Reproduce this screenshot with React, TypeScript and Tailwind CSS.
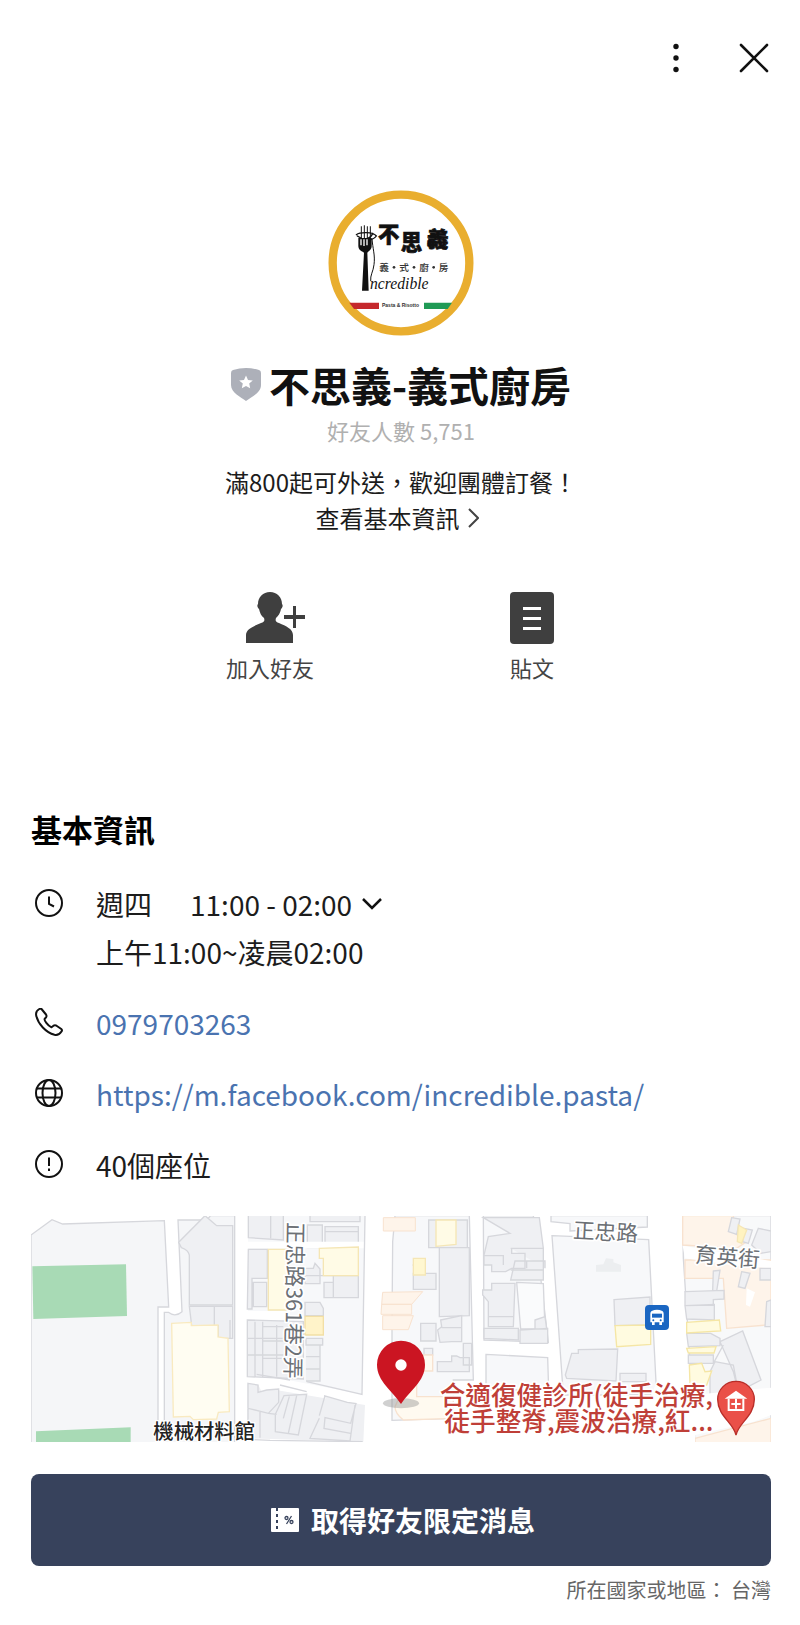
import type { ReactNode } from "react";

function Avatar() {
  return (
    <svg
      viewBox="54 62 438 438"
      className="w-[146px] h-[146px]"
      role="img"
      aria-label="不思義 義式廚房"
    >
      <circle cx="273" cy="281" r="205" fill="#fff" stroke="#e9ae2f" strokeWidth="25" />
      {/* fork */}
      <g stroke="#111" fill="none" strokeLinecap="round">
        <path d="M154 172v34M163 169v36M172 172v34M181 172v34" strokeWidth="3" />
        <path d="M139 196c10-8 50-10 60 4c-8 12-22 12-28 14M142 200c18 14 40 10 46-8" strokeWidth="4" />
        <path d="M186 208c2 30 10 50 6 78c-2 20-12 32-10 48" strokeWidth="3" />
      </g>
      <path
        d="M145 206h40v24c0 12-10 16-13 20l4 114h-20l6-114c-7-5-17-8-17-20Z"
        fill="#111"
      />
      <path d="M153 210v18M162 210v20M171 210v18" stroke="#fff" strokeWidth="4" />
      <g
        className="font-['Noto_Sans_CJK_TC','Noto_Sans',sans-serif]"
        fill="#111"
        stroke="#111"
      >
        <text x="204" y="217" fontSize="64" fontWeight="900" strokeWidth="2">不</text>
        <text x="272" y="241" fontSize="64" fontWeight="900" strokeWidth="2">思</text>
        <text x="350" y="234" fontSize="66" fontWeight="900" strokeWidth="2" transform="rotate(3 382 205)">義</text>
        <g stroke="none" fontSize="29" fontWeight="500" fill="#333">
          <text x="208" y="304">義</text>
          <text x="268" y="304">式</text>
          <text x="328" y="304">廚</text>
          <text x="386" y="304">房</text>
        </g>
      </g>
      <g fill="#333">
        <circle cx="252" cy="294" r="4" />
        <circle cx="312" cy="294" r="4" />
        <circle cx="371" cy="294" r="4" />
      </g>
      <text
        x="180"
        y="358"
        fontSize="47"
        fill="#111"
        className="font-['Liberation_Serif',serif] italic"
      >
        ncredible
      </text>
      <path d="M118 400h89v19h-75Z" fill="#c5282c" />
      <path d="M342 400h84l-13 19h-71Z" fill="#1f9a55" />
      <text
        x="216"
        y="414"
        fontSize="15"
        fontWeight="700"
        fill="#333"
        className="font-['Liberation_Sans',sans-serif]"
      >
        Pasta &amp; Risotto
      </text>
    </svg>
  );
}

function ShieldIcon() {
  return (
    <svg viewBox="0 0 30 34" className="w-[30px] h-[34px] shrink-0" aria-hidden="true">
      <path
        d="M2 3Q15-1 28 3Q30 3.500 30 6V18C30 26 20 30 15 34C10 30 0 26 0 18V6Q0 3.500 2 3Z"
        fill="#adb0b9"
      />
      <path
        d="m15 8.500 2 4.400 4.800.5-3.600 3.200 1 4.700-4.200-2.400-4.200 2.400 1-4.700-3.600-3.200 4.800-.5Z"
        fill="#fff"
      />
    </svg>
  );
}

function AddFriendIcon() {
  return (
    <svg viewBox="0 0 59 52" className="w-[59px] h-[52px]" fill="#3f3f3f" aria-hidden="true">
      <path d="M24 0C31 0 36 5 36 12C37 13 37 15 35 17C34 22 32 24 30 26C29 29 30 30 33 31C40 34 47 37 47 43V51H0V43C0 37 8 34 15 31C18 30 19 29 18 26C15 24 14 21 13 17C11 15 11 13 12 12C12 5 17 0 24 0Z" />
      <path d="M47 14h3v9h9v4h-9v9h-3v-9h-9v-4h9Z" />
    </svg>
  );
}

function PostIcon() {
  return (
    <svg viewBox="0 0 44 52" className="w-[44px] h-[52px]" aria-hidden="true">
      <rect width="44" height="52" rx="4" fill="#3f3f3f" />
      <path d="M13 16.500h18M13 26.500h18M13 36.500h18" stroke="#fff" strokeWidth="3" />
    </svg>
  );
}

function ClockIcon() {
  return (
    <svg viewBox="0 0 28 28" className="w-7 h-7" fill="none" stroke="#111" strokeWidth="2" aria-hidden="true">
      <circle cx="14" cy="14" r="13" />
      <path d="M14 7.500v7.500l5 2.500" />
    </svg>
  );
}

function PhoneIcon() {
  return (
    <svg viewBox="0 0 28 28" className="w-7 h-7" fill="none" stroke="#111" strokeWidth="2" strokeLinejoin="round" aria-hidden="true">
      <path d="M6.500 1L11 6.500Q12 8 11 9.300L9.600 11C9 12 12.500 17.500 16.500 19.300L18.500 17.700Q20 16.800 21.500 17.700L26.300 21Q27.500 22 26.500 23.500C24.500 26.500 22.500 27.500 19.500 26.800C11 24.500 3 16 1.200 7.500C.6 4.500 2 2.300 4.300 1Q5.500.3 6.500 1Z" />
    </svg>
  );
}

function GlobeIcon() {
  return (
    <svg viewBox="0 0 28 28" className="w-7 h-7" fill="none" stroke="#111" strokeWidth="2" aria-hidden="true">
      <circle cx="14" cy="14" r="13" />
      <ellipse cx="14" cy="14" rx="6.500" ry="13" />
      <path d="M2 9.500h24M2 18.500h24" />
    </svg>
  );
}

function NoticeIcon() {
  return (
    <svg viewBox="0 0 28 28" className="w-7 h-7" fill="none" stroke="#111" strokeWidth="2" aria-hidden="true">
      <circle cx="14" cy="14" r="13" />
      <path d="M14 7.500v8.500M14 18.500v2.500" />
    </svg>
  );
}

function CouponIcon() {
  return (
    <svg viewBox="0 0 28 24" className="w-7 h-6 shrink-0" aria-hidden="true">
      <path d="M1 0h26a1 1 0 0 1 1 1v22a1 1 0 0 1-1 1H1a1 1 0 0 1-1-1V1a1 1 0 0 1 1-1Z" fill="#fff" />
      <path d="M6 0v24" stroke="#37425c" strokeWidth="2" strokeDasharray="3 3" />
      <g stroke="#37425c" fill="none" strokeWidth="1.300">
        <path d="m20.500 8-5 8" />
        <circle cx="15.500" cy="10" r="1.500" />
        <circle cx="20.500" cy="14" r="1.500" />
      </g>
    </svg>
  );
}

function StreetMap() {
  return (
    <svg
      viewBox="0 0 2220 678"
      className="block w-full h-auto font-['Noto_Sans_CJK_TC','Noto_Sans',sans-serif]"
      role="img"
      aria-label="地圖"
    >
      <rect width="2220" height="678" fill="#fff" />

      {/* west blocks */}
      <g transform="translate(-33 -33)" fill="#f5f6f8" stroke="#d6d7dc" strokeWidth="4">
        <path d="M33 90L96 44L128 57L433 47L446 306H414V720H33Z" />
        <path d="M433 720V322H445Q466 338 486 320L474 45H560L572 32H644V720Z" />
        <path d="M476 112L555 32L590 62H638V300H508V150Q505 135 484 128Z" fill="#eff0f3" />
        <path d="M508 304H638V400H595V362H515Z" fill="#eff0f3" />
        <path d="M583 304V362M630 345V400" fill="none" />
        <path d="M37 184L318 178L321 333L40 342Z" fill="#a8dab5" stroke="none" />
        <path d="M48 679L332 667V720H48Z" fill="#a8dab5" stroke="none" />
        <path d="M455 355L514 352V362L594 360V396L624 400L628 620L595 622L590 642L520 644L510 634L460 636Z" fill="#fffdf2" stroke="#f9eac0" />
      </g>

      {/* lane 361 */}
      <g transform="translate(717 -33)" fill="#eff0f3" stroke="#d6d7dc" strokeWidth="4">
        <path d="M-65 30H285L276 568L-66 502V345L-66 130Z" fill="#f7f8fa" stroke="none" />
        <path d="M-65 30V98L40 105V30ZM2 30V100" />
        <path d="M120 30H270V50H120ZM165 65H265V113H165ZM112 60H157V128H112ZM165 80H265" />
        <path d="M-70 110H285V130H-70ZM-70 318H60V345H-70Z" fill="#fff" stroke="none" />
        <path d="M-65 133H-8V220H-54V312H-68ZM-50 232H-10V305H-50Z" />
        <path d="M-5 133H58V315H-5Z" fill="#fffbe6" stroke="#f5e6b5" />
        <path d="M105 190H130L135 175L150 192V236H105ZM162 232H190V212H265V278H162ZM105 292H150L160 310V332H105ZM190 232V278M105 212H190" />
        <path d="M148 130L265 126V212H160V160H148Z" fill="#fffbe6" stroke="#f5e6b5" />
        <path d="M105 334H160V390H105Z" fill="#fff3c9" stroke="#f2dfa5" />
        <path d="M-68 345L100 350V522L-68 515ZM-68 400H40M-68 450H40M-45 350V515M-22 365H40M-22 408H40M-22 460H40M-22 350V515M20 360V515" />
        <path d="M108 400H158V420H108ZM108 420H150V528H108M108 455H150M108 492H150" />
        <path d="M-68 535L-35 540L-25 560L0 552L285 600L280 710L-68 700ZM-68 610L0 620M-30 560L-20 700M-3 552V620M0 550L-18 640" stroke="none" />
        <path d="M-66 535L-36 540V562L-10 555L26 552V592L-5 625L-66 610ZM42 572L110 568L85 690L16 680V628ZM58 574L40 640M80 572L55 685M-66 700V612M-30 618V698M-5 625L20 628M162 572L232 592L258 596L242 655L165 638L162 670L242 685M148 640L120 700L240 708L255 600M148 632L165 572" />
        <path d="M285 32L276 568L110 530M-40 508L60 525" fill="none" />
        <path d="M110 560L30 540M-66 703L0 706L278 710" fill="none" />
      </g>

      {/* middle block */}
      <g transform="translate(717 -33)" fill="#eff0f3" stroke="#d6d7dc" strokeWidth="4">
        <path d="M375 32H598L610 525H550V640L366 646V360L368 110Z" fill="#f7f8fa" />
        <path d="M476 45H592V128H476ZM508 128H598V332L508 335Z" />
        <path d="M498 45H558V118L498 124Z" fill="#fffbe6" stroke="#f5e6b5" />
        <path d="M430 205H498V253H430ZM428 180H440V205" />
        <path d="M430 160H466V210H430Z" fill="#fff7d0" stroke="#f5e6b5" />
        <g fill="#fef4ea" stroke="#f8e2cf" strokeWidth="3">
          <path d="M340 38H436V78H340ZM338 262L458 260L425 298H335ZM335 298H425V328H333ZM338 332H430L415 374H338Z" />
        </g>
        <path d="M452 355H498V408H452ZM512 345L575 332V410H545L510 412L503 375L515 365ZM515 368H575M502 470H545V453H560L570 458H598V500H502ZM580 415H605V480H580ZM462 430H488V450H462Z" />
        <path d="M446 450H488V498H440V575H550V640L400 645Q375 625 375 605Z" fill="#fffaf0" stroke="#f8e2cf" />
      </g>

      {/* block between the lanes */}
      <g transform="translate(717 -33)" fill="#eff0f3" stroke="#d6d7dc" strokeWidth="4">
        <path d="M640 32H790L835 412L642 405Z" fill="#f7f8fa" />
        <path d="M640 38H808L820 130H725V145H765V190H725L707 200H665V180H642V150L655 95L720 85ZM722 130H820V225H722L735 168H825V190M642 152H700V180" />
        <path d="M665 235H735L730 365H655V290L638 270V255H665ZM642 370H745V405L642 400ZM655 335H730M770 168V190M722 195H820" />
        <path d="M740 232L820 236L825 372H752Z" fill="#fafbfc" />
        <path d="M750 375L833 370V415H750ZM795 345L825 335L830 372H795Z" />
        <path d="M648 448L833 458L836 555H648Z" fill="#f7f8fa" />
      </g>

      {/* school block */}
      <g transform="translate(1467 -33)" fill="#eff0f3" stroke="#d6d7dc" strokeWidth="4">
        <path d="M93 32V50L150 56V78L382 66V32Z" fill="#f7f8fa" />
        <path d="M96 92L386 104L410 570H130Z" fill="#f7f8fa" />
        <path d="M228 200V180L250 178L258 160L280 162V172L303 180V200Z" stroke="none" fill="#eceef0" />
        <path d="M282 284L390 276V360L285 362ZM136 510L155 445L175 445V434L293 432L288 528L140 520ZM300 505H378V530H300Z" />
        <path d="M285 362L392 360V418L290 425Z" fill="#fffbe0" stroke="#f5e6a5" />
      </g>

      {/* east blocks */}
      <g transform="translate(1467 -33)" fill="#eff0f3" stroke="#d6d7dc" strokeWidth="4">
        <path d="M488 32H753V720H525L512 500L490 160Z" fill="#f8f9fa" />
        <path d="M488 32H640L645 85L680 110L650 130L488 120Z" fill="#fef4ea" stroke="#f8e2cf" />
        <path d="M495 165H753V290L742 360L620 370L610 220H495Z" fill="#fef4ea" stroke="#f8e2cf" />
        <path d="M488 122L753 168V190L650 182L495 160Z" fill="#fff" stroke="none" />
        <path d="M635 38L660 42L650 88L625 80ZM672 70L697 75L685 115L668 110ZM715 70L753 78V140L722 145L695 120ZM580 198L600 196L590 258H578Z" />
        <path d="M655 60L680 75L665 115L652 110Z" fill="#fff3c0" stroke="#f5e6b5" />
        <path d="M665 200L690 205L675 250L655 245ZM720 190H753V225H720ZM740 290L753 285V365H735Z" />
        <path d="M680 250L705 262L690 305L678 300Z" fill="#fff" stroke="none" />
        <path d="M495 260L612 256V282L580 284V300L495 302ZM495 302L583 298V345L500 342ZM500 385H572L600 400V422L505 425ZM505 450H580V475H505ZM600 410L668 378L723 525L655 560L640 500ZM585 470L640 480L655 560L570 590V500ZM580 475L610 420" />
        <path d="M500 352L598 345L602 378L500 384ZM500 430L588 425L582 444H505ZM508 480L545 475L555 500L575 498L560 540H510Z" fill="#fffbe0" stroke="#f5e6a5" />
        <path d="M525 700L753 640V720H525Z" fill="#fef4ea" stroke="#f8e2cf" />
        <path d="M410 532L505 530L515 570L753 548V630L700 650L525 690V720H380V600Z" fill="#fff" stroke="none" />
      </g>

      {/* street names */}
      <g fill="#6c7075" stroke="#fff" strokeWidth="10" paintOrder="stroke" strokeLinejoin="round">
        <text x="1625" y="66" fontSize="65" transform="rotate(3 1625 66)">正忠路</text>
        <text x="1990" y="138" fontSize="65" transform="rotate(5 1990 138)">育英街</text>
        <text x="770" y="18" fontSize="65" transform="rotate(91 770 18)">正忠路361巷2弄</text>
      </g>
      <text x="367" y="670" fontSize="61" fontWeight="500" fill="#222" stroke="#fff" strokeWidth="8" paintOrder="stroke" strokeLinejoin="round">
        機械材料館
      </text>

      {/* bus stop */}
      <g transform="translate(1842 267)">
        <rect width="72" height="75" rx="12" fill="#1a66c2" />
        <path d="M20 18Q36 10 52 18Q56 20 56 26V52H51V60H43V52H29V60H21V52H16V26Q16 20 20 18Z" fill="#fff" />
        <path d="M21 26H51V38H21Z" fill="#1a66c2" />
        <circle cx="25" cy="46" r="3" fill="#1a66c2" />
        <circle cx="47" cy="46" r="3" fill="#1a66c2" />
      </g>

      {/* clinic */}
      <g fontSize="77" fontWeight="500" fill="#bf3f38" stroke="#fff" strokeWidth="10" paintOrder="stroke" strokeLinejoin="round">
        <text x="1226" y="568">合適復健診所(徒手治療,</text>
        <text x="1240" y="646">徒手整脊,震波治療,紅...</text>
      </g>
      <g transform="translate(2115 0)">
        <path d="M0 657C-8 620-55 600-55 550A55 54 0 1 1 55 550C55 600 8 620 0 657Z" fill="#ea5048" stroke="#b92d28" strokeWidth="4" />
        <path d="M-34 548L0 524L34 548Z" fill="#fff" />
        <path d="M-22 548V582H22V548" fill="none" stroke="#fff" strokeWidth="6" />
        <path d="M0 548V578M-14 564H14" stroke="#fff" strokeWidth="6" />
      </g>

      {/* current place */}
      <ellipse cx="1110" cy="562" rx="54" ry="15" fill="#8a8a8a" opacity=".4" />
      <path d="M1110 564C1085 525 1038 496 1038 446A72 72 0 1 1 1182 446C1182 496 1135 525 1110 564Z" fill="#cb1522" />
      <circle cx="1110" cy="447" r="17" fill="#fff" />
    </svg>
  );
}

function InfoRow({ icon, children }: { icon: ReactNode; children: ReactNode }) {
  return (
    <li className="flex items-start gap-[33px] pl-1">
      <span className="flex h-[46px] w-7 shrink-0 items-center">{icon}</span>
      <div className="min-w-0 text-[28px] leading-[48px]">{children}</div>
    </li>
  );
}

export default function App() {
  return (
    <main className="min-h-screen bg-white text-[#1c1c1c] font-['Noto_Sans_CJK_TC','Noto_Sans',sans-serif]">
      {/* Top bar */}
      <header className="flex h-[116px] items-center justify-end gap-[30px] pr-[22px]">
        <button type="button" aria-label="更多" className="flex h-12 w-12 items-center justify-center">
          <svg viewBox="0 0 6 30" className="h-[30px] w-[6px]" fill="#111">
            <circle cx="3" cy="3.500" r="2.700" />
            <circle cx="3" cy="15" r="2.700" />
            <circle cx="3" cy="26.500" r="2.700" />
          </svg>
        </button>
        <button type="button" aria-label="關閉" className="flex h-12 w-12 items-center justify-center">
          <svg viewBox="0 0 30 30" className="h-[30px] w-[30px]" stroke="#111" strokeWidth="2.600" strokeLinecap="round">
            <path d="M2 2L28 28M28 2L2 28" />
          </svg>
        </button>
      </header>

      {/* Profile */}
      <section className="flex flex-col items-center pt-[74px] pl-[2px]">
        <Avatar />
        <div className="mt-6 flex items-center gap-2">
          <ShieldIcon />
          <h1 className="text-[41px] leading-[48px] font-bold text-[#111]">不思義-義式廚房</h1>
        </div>
        <p className="mt-[6px] text-[22px] leading-8 text-[#b0b0b0]">好友人數 5,751</p>
        <p className="mt-[18px] text-[24px] leading-9">滿800起可外送，歡迎團體訂餐！</p>
        <a href="#info" className="flex items-center gap-2 pr-2 text-[24px] leading-9">
          查看基本資訊
          <svg viewBox="0 0 11 20" className="h-5 w-[11px]" fill="none" stroke="#444" strokeWidth="2" aria-hidden="true">
            <path d="M1 1L10 10L1 19" />
          </svg>
        </a>

        <div className="mt-14 grid w-full max-w-[524px] grid-cols-2 text-[22px] leading-7 text-[#444]">
          <button type="button" className="flex flex-col items-center gap-[9px]">
            <span className="pl-[10px]">
              <AddFriendIcon />
            </span>
            加入好友
          </button>
          <button type="button" className="flex flex-col items-center gap-[9px]">
            <PostIcon />
            貼文
          </button>
        </div>
      </section>

      {/* Basic info */}
      <section id="info" className="pt-32 pr-[29px] pl-[31px]">
        <h2 className="text-[31px] leading-10 font-bold text-black">基本資訊</h2>

        <ul className="mt-[31px] flex flex-col gap-[23px]">
          <InfoRow icon={<ClockIcon />}>
            <button type="button" className="flex items-center">
              <span>週四</span>
              <span className="ml-[38px]">11:00 - 02:00</span>
              <svg viewBox="0 0 20 12" className="ml-[10px] h-3 w-5" fill="none" stroke="#111" strokeWidth="2.500" aria-hidden="true">
                <path d="M1 1L10 10L19 1" />
              </svg>
            </button>
            <p>上午11:00~凌晨02:00</p>
          </InfoRow>
          <InfoRow icon={<PhoneIcon />}>
            <a href="tel:0979703263" className="text-[#4a73b0]">
              0979703263
            </a>
          </InfoRow>
          <InfoRow icon={<GlobeIcon />}>
            <a href="https://m.facebook.com/incredible.pasta/" className="break-words text-[#4a73b0]">
              https://m.facebook.com/incredible.pasta/
            </a>
          </InfoRow>
          <InfoRow icon={<NoticeIcon />}>40個座位</InfoRow>
        </ul>

        <div className="mt-[27px]">
          <StreetMap />
        </div>
      </section>

      {/* Footer */}
      <footer className="pt-8 pr-[29px] pb-4 pl-[31px]">
        <button
          type="button"
          className="flex w-full items-center justify-center gap-3 rounded-lg bg-[#37425c] py-[26px] pl-1 text-[28px] leading-10 font-bold text-white"
        >
          <CouponIcon />
          取得好友限定消息
        </button>
        <p className="mt-[10px] text-right text-[20px] leading-7 text-[#666]">所在國家或地區： 台灣</p>
      </footer>
    </main>
  );
}
